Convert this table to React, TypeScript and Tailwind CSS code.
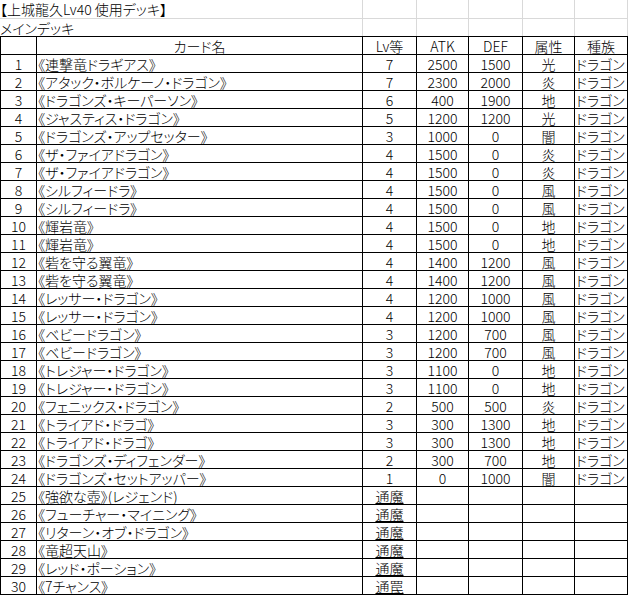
import React from "react";

type Row = {
  name: string;
  lv: string;
  atk?: string;
  def?: string;
  attr?: string;
  race?: string;
};

const rows: Row[] = [
  { name: "《連撃竜ドラギアス》", lv: "7", atk: "2500", def: "1500", attr: "光", race: "ドラゴン" },
  { name: "《アタック・ボルケーノ・ドラゴン》", lv: "7", atk: "2300", def: "2000", attr: "炎", race: "ドラゴン" },
  { name: "《ドラゴンズ・キーパーソン》", lv: "6", atk: "400", def: "1900", attr: "地", race: "ドラゴン" },
  { name: "《ジャスティス・ドラゴン》", lv: "5", atk: "1200", def: "1200", attr: "光", race: "ドラゴン" },
  { name: "《ドラゴンズ・アップセッター》", lv: "3", atk: "1000", def: "0", attr: "闇", race: "ドラゴン" },
  { name: "《ザ・ファイアドラゴン》", lv: "4", atk: "1500", def: "0", attr: "炎", race: "ドラゴン" },
  { name: "《ザ・ファイアドラゴン》", lv: "4", atk: "1500", def: "0", attr: "炎", race: "ドラゴン" },
  { name: "《シルフィードラ》", lv: "4", atk: "1500", def: "0", attr: "風", race: "ドラゴン" },
  { name: "《シルフィードラ》", lv: "4", atk: "1500", def: "0", attr: "風", race: "ドラゴン" },
  { name: "《輝岩竜》", lv: "4", atk: "1500", def: "0", attr: "地", race: "ドラゴン" },
  { name: "《輝岩竜》", lv: "4", atk: "1500", def: "0", attr: "地", race: "ドラゴン" },
  { name: "《砦を守る翼竜》", lv: "4", atk: "1400", def: "1200", attr: "風", race: "ドラゴン" },
  { name: "《砦を守る翼竜》", lv: "4", atk: "1400", def: "1200", attr: "風", race: "ドラゴン" },
  { name: "《レッサー・ドラゴン》", lv: "4", atk: "1200", def: "1000", attr: "風", race: "ドラゴン" },
  { name: "《レッサー・ドラゴン》", lv: "4", atk: "1200", def: "1000", attr: "風", race: "ドラゴン" },
  { name: "《ベビードラゴン》", lv: "3", atk: "1200", def: "700", attr: "風", race: "ドラゴン" },
  { name: "《ベビードラゴン》", lv: "3", atk: "1200", def: "700", attr: "風", race: "ドラゴン" },
  { name: "《トレジャー・ドラゴン》", lv: "3", atk: "1100", def: "0", attr: "地", race: "ドラゴン" },
  { name: "《トレジャー・ドラゴン》", lv: "3", atk: "1100", def: "0", attr: "地", race: "ドラゴン" },
  { name: "《フェニックス・ドラゴン》", lv: "2", atk: "500", def: "500", attr: "炎", race: "ドラゴン" },
  { name: "《トライアド・ドラゴ》", lv: "3", atk: "300", def: "1300", attr: "地", race: "ドラゴン" },
  { name: "《トライアド・ドラゴ》", lv: "3", atk: "300", def: "1300", attr: "地", race: "ドラゴン" },
  { name: "《ドラゴンズ・ディフェンダー》", lv: "2", atk: "300", def: "700", attr: "地", race: "ドラゴン" },
  { name: "《ドラゴンズ・セットアッパー》", lv: "1", atk: "0", def: "1000", attr: "闇", race: "ドラゴン" },
  { name: "《強欲な壺》(レジェンド)", lv: "通魔" },
  { name: "《フューチャー・マイニング》", lv: "通魔" },
  { name: "《リターン・オブ・ドラゴン》", lv: "通魔" },
  { name: "《竜超天山》", lv: "通魔" },
  { name: "《レッド・ポーション》", lv: "通魔" },
  { name: "《7チャンス》", lv: "通罠" },
];

const cell =
  "h-[18px] border-r border-b border-black flex items-center overflow-hidden whitespace-nowrap leading-[16px]";
const grid = "h-[19px] border-r border-b border-[#d9d9d9]";
const grid2 = "h-[17px] border-r border-[#d9d9d9]";

export default function App() {
  return (
    <div
      className="w-[628px] h-[595px] bg-white text-black text-[14px] font-light overflow-hidden"
      style={{ fontFamily: '"Noto Sans CJK JP", "Liberation Sans", sans-serif', fontFeatureSettings: '"palt"' }}
    >
      {/* sheet title rows */}
      <div className="grid grid-cols-[363px_54px_52px_54px_52px_53px]">
        <div className={`${grid} flex items-center whitespace-nowrap leading-[16px]`}>
          【上城龍久Lv40 使用デッキ】
        </div>
        <div className={grid} />
        <div className={grid} />
        <div className={grid} />
        <div className={grid} />
        <div className={grid} />
        <div className={`${grid2} flex items-center whitespace-nowrap leading-[16px]`}>
          メインデッキ
        </div>
        <div className={grid2} />
        <div className={grid2} />
        <div className={grid2} />
        <div className={grid2} />
        <div className={grid2} />
      </div>

      {/* deck table */}
      <div className="grid grid-cols-[36px_326px_54px_52px_54px_52px_53px] border-l border-t border-black">
        <div className={cell} />
        <div className={`${cell} justify-center`}>カード名</div>
        <div className={`${cell} justify-center`}>Lv等</div>
        <div className={`${cell} justify-center`}>ATK</div>
        <div className={`${cell} justify-center`}>DEF</div>
        <div className={`${cell} justify-center`}>属性</div>
        <div className={`${cell} justify-center`}>種族</div>

        {rows.map((r, i) => (
          <React.Fragment key={i}>
            <div className={`${cell} justify-center`}>{i + 1}</div>
            <div className={`${cell} pl-[1px]`}>{r.name}</div>
            <div className={`${cell} justify-center`}>
              {r.atk ? r.lv : <span className="underline underline-offset-[1px]">{r.lv}</span>}
            </div>
            <div className={`${cell} justify-center`}>{r.atk}</div>
            <div className={`${cell} justify-center`}>{r.def}</div>
            <div className={`${cell} justify-center`}>{r.attr}</div>
            <div className={`${cell} pl-[1px]`}>{r.race}</div>
          </React.Fragment>
        ))}
      </div>
    </div>
  );
}
